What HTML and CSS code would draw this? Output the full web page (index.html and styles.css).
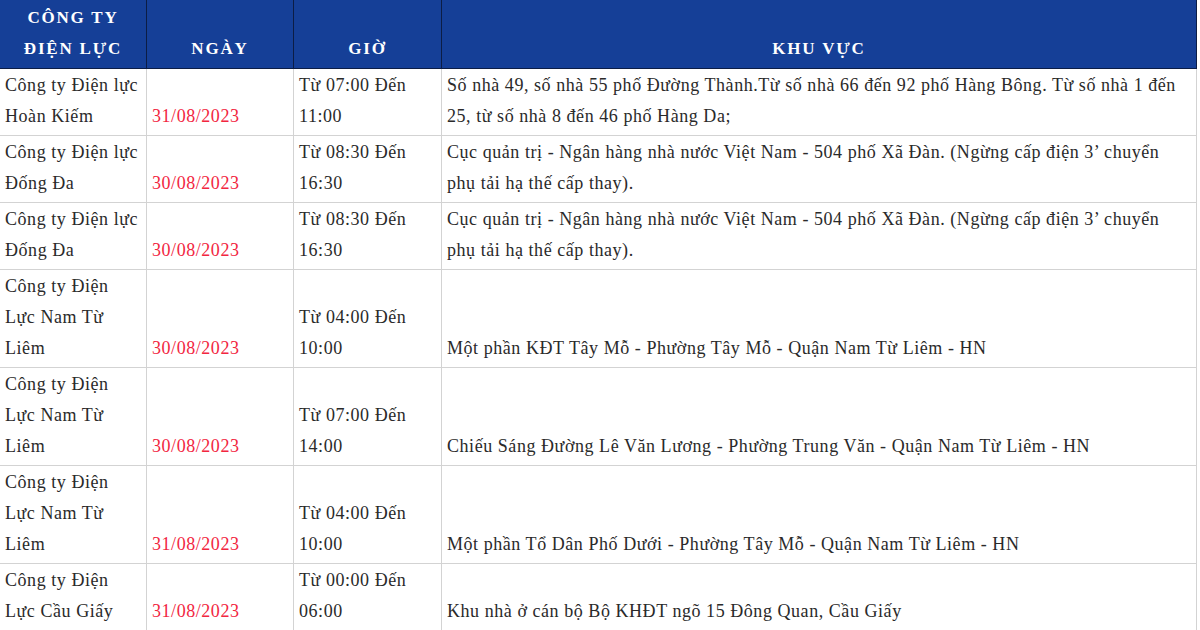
FILE: index.html
```html
<!DOCTYPE html>
<html>
<head>
  <link rel="stylesheet" href="styles.css">
</head>
<body>
  <table class="outage">
    <colgroup>
      <col class="col-company">
      <col class="col-date">
      <col class="col-time">
      <col class="col-area">
    </colgroup>
    <thead>
      <tr>
        <th>CÔNG TY<br>ĐIỆN LỰC</th>
        <th>NGÀY</th>
        <th>GIỜ</th>
        <th>KHU VỰC</th>
      </tr>
    </thead>
    <tbody>
      <tr>
        <td>Công ty Điện lực Hoàn Kiếm</td>
        <td class="date">31/08/2023</td>
        <td>Từ 07:00 Đến 11:00</td>
        <td>Số nhà 49, số nhà 55 phố Đường Thành.Từ số nhà 66 đến 92 phố Hàng Bông. Từ số nhà 1 đến 25, từ số nhà 8 đến 46 phố Hàng Da;</td>
      </tr>
      <tr>
        <td>Công ty Điện lực Đống Đa</td>
        <td class="date">30/08/2023</td>
        <td>Từ 08:30 Đến 16:30</td>
        <td>Cục quản trị - Ngân hàng nhà nước Việt Nam - 504 phố Xã Đàn. (Ngừng cấp điện 3’ chuyển phụ tải hạ thế cấp thay).</td>
      </tr>
      <tr>
        <td>Công ty Điện lực Đống Đa</td>
        <td class="date">30/08/2023</td>
        <td>Từ 08:30 Đến 16:30</td>
        <td>Cục quản trị - Ngân hàng nhà nước Việt Nam - 504 phố Xã Đàn. (Ngừng cấp điện 3’ chuyển phụ tải hạ thế cấp thay).</td>
      </tr>
      <tr>
        <td>Công ty Điện Lực Nam Từ Liêm</td>
        <td class="date">30/08/2023</td>
        <td>Từ 04:00 Đến 10:00</td>
        <td>Một phần KĐT Tây Mỗ - Phường Tây Mỗ - Quận Nam Từ Liêm - HN</td>
      </tr>
      <tr>
        <td>Công ty Điện Lực Nam Từ Liêm</td>
        <td class="date">30/08/2023</td>
        <td>Từ 07:00 Đến 14:00</td>
        <td>Chiếu Sáng Đường Lê Văn Lương - Phường Trung Văn - Quận Nam Từ Liêm - HN</td>
      </tr>
      <tr>
        <td>Công ty Điện Lực Nam Từ Liêm</td>
        <td class="date">31/08/2023</td>
        <td>Từ 04:00 Đến 10:00</td>
        <td>Một phần Tổ Dân Phố Dưới - Phường Tây Mỗ - Quận Nam Từ Liêm - HN</td>
      </tr>
      <tr>
        <td>Công ty Điện Lực Cầu Giấy</td>
        <td class="date">31/08/2023</td>
        <td>Từ 00:00 Đến 06:00</td>
        <td>Khu nhà ở cán bộ Bộ KHĐT ngõ 15 Đông Quan, Cầu Giấy</td>
      </tr>
    </tbody>
  </table>
</body>
</html>
```

FILE: styles.css
```css
body {
  margin: 0;
  background: #fff;
  font-family: "Liberation Serif", "Times New Roman", serif;
  overflow: hidden;
}

.outage {
  border-collapse: collapse;
  width: 1198px;
  margin-left: -1px;
  table-layout: fixed;
  font-size: 18px;
  letter-spacing: 0.55px;
  line-height: 31px;
  color: #2a2a2a;
}

.col-company { width: 147px; }
.col-date { width: 147px; }
.col-time { width: 148px; }

.outage th {
  background: #153f97;
  color: #fff;
  font-weight: bold;
  font-size: 17px;
  letter-spacing: 1.8px;
  text-align: center;
  vertical-align: bottom;
  padding: 2px 5px 4px;
  border: 1px solid #0c1d45;
  border-top: none;
}

.outage td {
  vertical-align: bottom;
  text-align: left;
  padding: 1px 3px 3px 5px;
  border: 1px solid #d3d3d3;
}

.outage td.date {
  color: #f2263f;
}
```
